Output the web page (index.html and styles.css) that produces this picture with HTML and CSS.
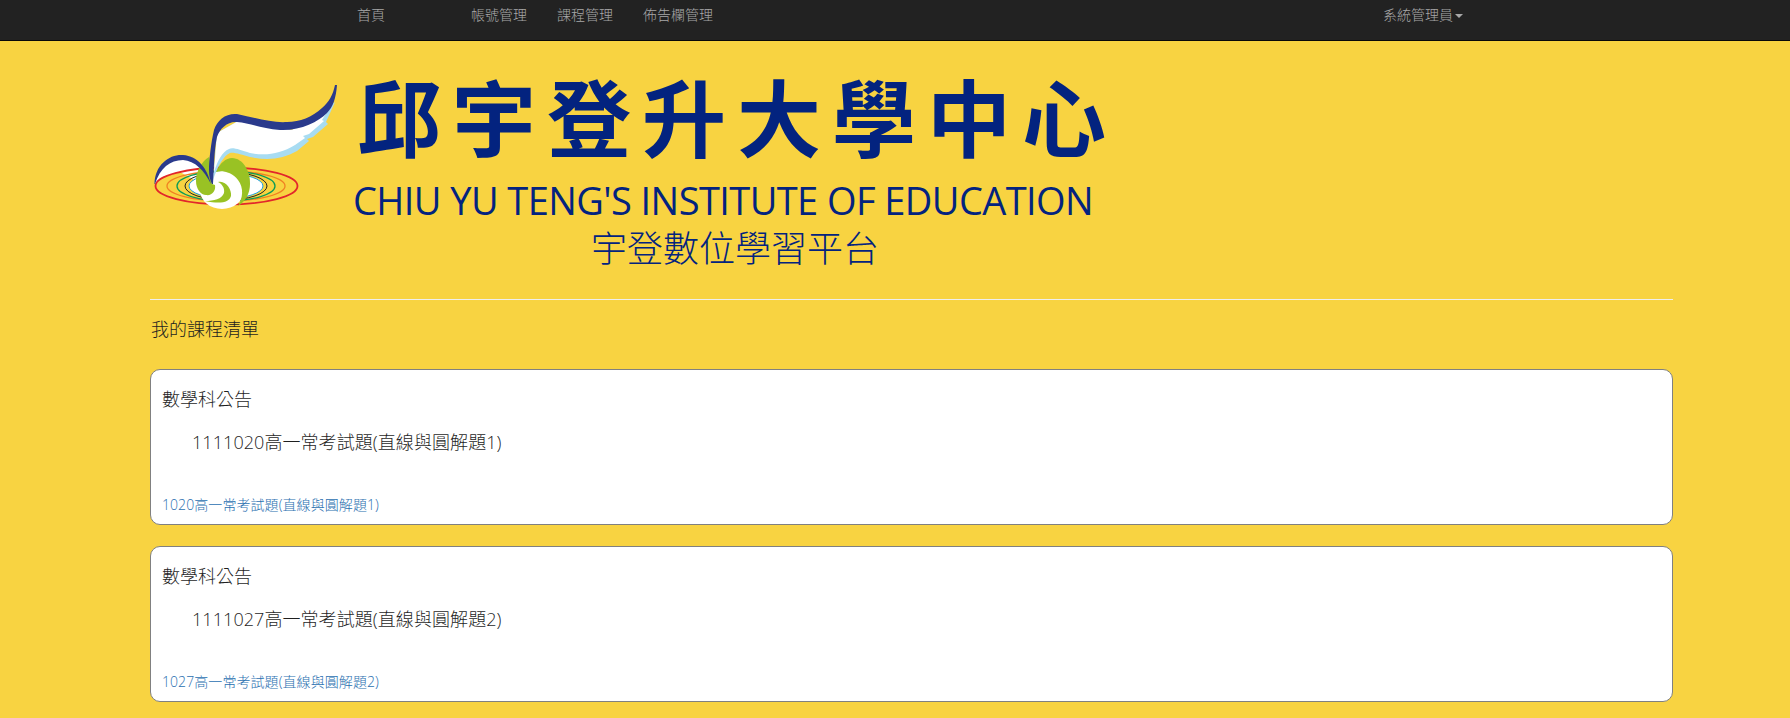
FILE: index.html
```html
<!DOCTYPE html>
<html lang="zh-Hant">
<head>
<meta charset="utf-8">
<title>宇登數位學習平台</title>
<link rel="stylesheet" href="styles.css">
</head>
<body>
<nav class="navbar">
  <ul class="nav-left">
    <li class="nav-home"><a href="#">首頁</a></li>
    <li><a href="#">帳號管理</a></li>
    <li><a href="#">課程管理</a></li>
    <li><a href="#">佈告欄管理</a></li>
  </ul>
  <a class="nav-user" href="#">系統管理員<span class="caret"></span></a>
</nav>
<main class="container">
  <header class="brand">
    <svg class="logo" viewBox="150 80 200 135" width="200" height="135" aria-hidden="true">
      <path d="M155 184C156 166 170 156 183 156C197 156 207 168 211 184L205 186L180 172L160 178Z" fill="#fff"/>
      <g fill="none">
        <ellipse cx="226.500" cy="186" rx="71" ry="18.500" stroke="#e2262b" stroke-width="1.800"/>
        <ellipse cx="226" cy="186" rx="59" ry="15" stroke="#f08122" stroke-width="1.300"/>
        <ellipse cx="226" cy="186" rx="49" ry="15" stroke="#0d9b57" stroke-width="1.300"/>
        <ellipse cx="226" cy="186" rx="41" ry="14" stroke="#222"/>
        <ellipse cx="226" cy="186" rx="37" ry="12.500" stroke="#1ba1e2" fill="#fff"/>
      </g>
      <ellipse cx="222" cy="190" rx="22" ry="19" fill="#fff"/>
      <path d="M209 157C201 162 196 172 196 181C196 189 201 195 206 195C212 196 216 191 215 185L212 184Z" fill="#99c224"/>
      <path d="M216 172C220 163 226 158 232 158C243 158 251 172 250 184C250 193 246 201 238 206C243 198 244 188 238 180C232 172 222 170 216 172Z" fill="#99c224"/>
      <path d="M218 182C226 180 232 190 231 196C229 203 220 204 205 201C214 201 222 199 224 193C225 188 222 184 218 182Z" fill="#99c224"/>
      <path d="M335 102L326 122L328 124L313 137L307 139L309 141L297 151C283 159 268 161 250 157C242 155 234 152 230 153C224 156 219 163 213 180L217 133L240 120L292 130Z" fill="#a8dcf2"/>
      <path d="M333 102L322 120L324 121L309 134L303 136L305 138L295 145C280 154 266 156 250 153C240 150 233 147 229 149C222 152 218 160 214 172L217 133L240 120L292 130Z" fill="#fff"/>
      <path d="M335 85C333 95 329 102 322 108C312 117 300 122 287 122C272 123 256 118 237 114C226 113 217 120 214 130C211 143 209 160 209 170C209 176 210 180 212 184L213 184C214 170 214 150 217 137C220 128 228 121 237 122C250 123 262 129 280 130C300 131 318 122 327 113C333 107 336 98 337 85Z" fill="#2a3a8c"/>
      <path d="M154.500 184C155 164 170 154 183 155C198 156 207 168 211 184C204 170 195 161 183 160C170 160 160 168 155 184Z" fill="#2a3a8c"/>
    </svg>
    <div class="brand-text">
      <h1 class="brand-name">邱宇登升大學中心</h1>
      <p class="brand-en">CHIU YU TENG'S INSTITUTE OF EDUCATION</p>
      <p class="brand-sub">宇登數位學習平台</p>
    </div>
  </header>
  <hr class="divider">
  <h2 class="list-title">我的課程清單</h2>
  <section class="cards">
    <article class="card">
      <div class="card-subject">數學科公告</div>
      <div class="card-title">1111020高一常考試題(直線與圓解題1)</div>
      <a class="card-link" href="#">1020高一常考試題(直線與圓解題1)</a>
    </article>
    <article class="card">
      <div class="card-subject">數學科公告</div>
      <div class="card-title">1111027高一常考試題(直線與圓解題2)</div>
      <a class="card-link" href="#">1027高一常考試題(直線與圓解題2)</a>
    </article>
  </section>
</main>
</body>
</html>
```
FILE: styles.css
```css
* { box-sizing: border-box; }
html, body { margin: 0; padding: 0; }
body {
  background: #f8d341;
  color: #1f1f1f;
  font-family: "Open Sans", "Noto Sans CJK TC", sans-serif;
  font-size: 14px;
  font-weight: 300;
}
a { text-decoration: none; }

.navbar {
  display: flex;
  justify-content: space-between;
  height: 41px;
  padding: 5px 327px 0 342px;
  background: #222;
  border-bottom: 1px solid #080808;
  line-height: 20px;
}
.navbar a { color: #a8a8a8; }
.nav-left {
  display: flex;
  gap: 30px;
  margin: 0;
  padding: 0 0 0 15px;
  list-style: none;
}
.nav-home { margin-right: 56px; }
.caret {
  display: inline-block;
  margin-left: 2px;
  vertical-align: middle;
  border-top: 4px solid;
  border-left: 4px solid transparent;
  border-right: 4px solid transparent;
}

.container { padding: 0 117px 0 150px; }

.brand { display: flex; height: 258px; }
.logo { flex: none; margin-top: 39px; }
.brand-text { margin-left: 3px; color: #03237f; }
.brand-name {
  margin: 18px 0 0 4px;
  font-size: 84px;
  font-weight: 700;
  line-height: 120px;
  letter-spacing: 11px;
  white-space: nowrap;
}
.brand-en {
  margin: 0;
  font-size: 38px;
  line-height: 42px;
  font-weight: 400;
  letter-spacing: -0.58px;
  white-space: nowrap;
}
.brand-sub {
  margin: 4px 0 0 238px;
  font-size: 36px;
  line-height: 48px;
  white-space: nowrap;
}

.divider {
  height: 1px;
  margin: 0;
  border: 0;
  background: #eee;
}
.list-title {
  margin: 16px 0 0 1px;
  font-size: 18px;
  font-weight: 300;
  line-height: 26px;
}
.cards {
  display: flex;
  flex-direction: column;
  gap: 21px;
  margin-top: 27px;
}
.card {
  display: flex;
  flex-direction: column;
  height: 156px;
  padding: 16px 11px 0;
  background: #fff;
  border: 1px solid #808080;
  border-radius: 10px;
}
.card-subject { font-size: 18px; line-height: 26px; }
.card-title {
  margin: 17px 0 0 30px;
  font-size: 18px;
  line-height: 26px;
  letter-spacing: 0.07px;
}
.card-link {
  margin-top: 40px;
  color: #2a6fb0;
  font-size: 14px;
  line-height: 20px;
  letter-spacing: 0.07px;
}
```
